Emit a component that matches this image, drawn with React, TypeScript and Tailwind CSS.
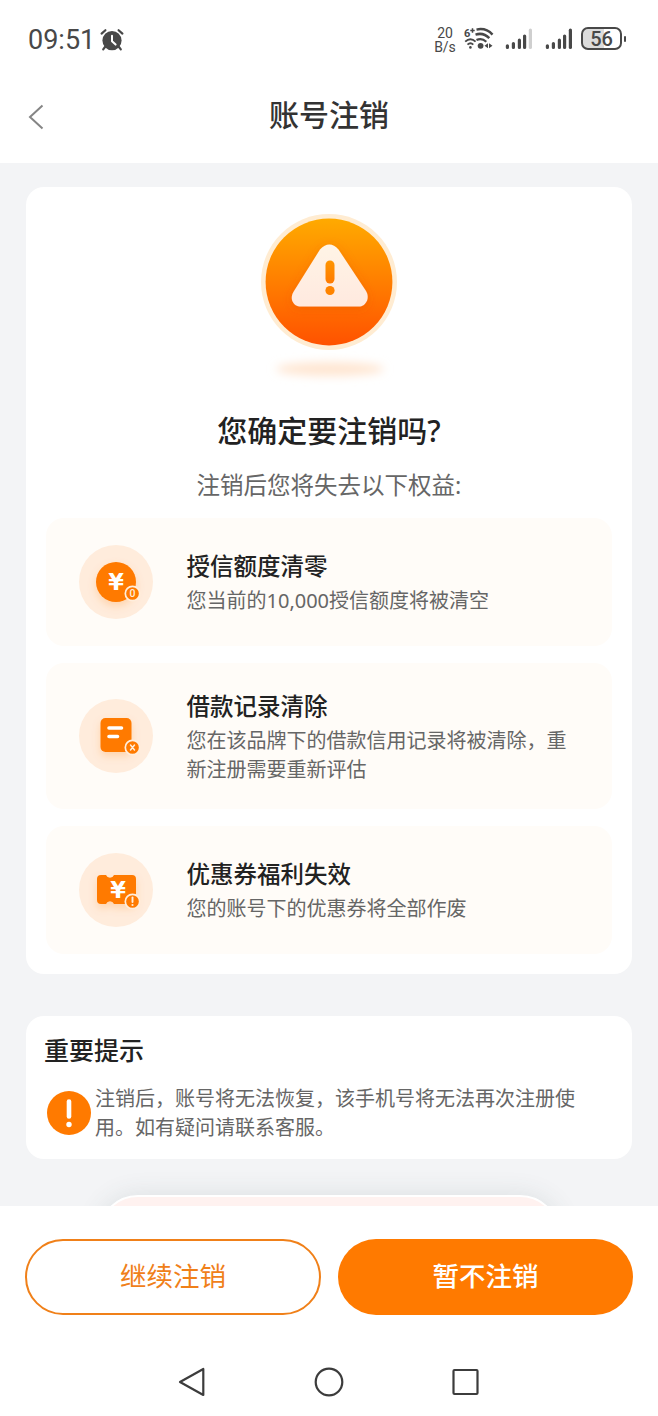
// App.tsx
import type { ReactNode } from 'react';

const ORANGE = '#ff7a00';

function AlarmIcon() {
  return (
    <svg width="24" height="24" viewBox="0 0 24 24" fill="none" className="ml-[5px]">
      <circle cx="12" cy="12.6" r="9.6" fill="#484848" />
      <path d="M1.6 5.6 5.4 2.2M22.4 5.6 18.6 2.2M5 19 3.2 21.4M19 19l1.8 2.4" stroke="#484848" strokeWidth="2.2" strokeLinecap="round" />
      <path d="M12 7.8v5.4l3.6 3.4" stroke="#fff" strokeWidth="2" strokeLinecap="round" strokeLinejoin="round" />
    </svg>
  );
}

function WifiIcon() {
  return (
    <svg width="30" height="26" viewBox="0 0 30 26" fill="none" stroke="#484848" strokeWidth="2">
      <text x="0" y="10.5" fontSize="11" fontWeight="700" fontFamily="Roboto, sans-serif" fill="#484848" stroke="none">6</text>
      <path d="M6.3 4.5h4.4M8.5 2.3v4.4" strokeWidth="1.5" />
      <path d="M12.5 3.6c6.2-1.4 11.7.4 16 5" strokeWidth="2.5" />
      <path d="M11.5 8.6c5.2-1.6 10-.4 13.8 3.6" strokeWidth="2.5" />
      <path d="M12.500 14c3.500-1.700 6.800-1.100 9.800 1.700" strokeWidth="2.2" />
      <path d="M1.200 15.600c3.200-3 7.200-3 10.400 0" strokeWidth="1.9" />
      <path d="M3.500 18.600c1.800-1.700 4-1.700 5.800 0" strokeWidth="1.8" />
      <circle cx="6.400" cy="21.400" r="1.300" fill="#484848" stroke="none" />
      <circle cx="16.600" cy="19.800" r="2.900" fill="#484848" stroke="none" />
      <path d="m24 17.300-3.500 2.500 3.500 2.500zM25 17.300l3.500 2.500-3.500 2.500z" fill="#484848" stroke="none" />
    </svg>
  );
}

function Signal({ full }: { full?: boolean }) {
  return (
    <svg width="28" height="24" viewBox="0 0 28 24" fill="none" strokeWidth="3.2" strokeLinecap="round" stroke="#484848">
      <path d="M2.400 19.800v1.600M8.400 17.600v3.800M14.400 14.200v7.200M19.600 10v11.400" />
      <path d="M25.400 4.200v17.200" stroke={full ? '#484848' : '#cfcfcf'} />
    </svg>
  );
}

function StatusBar() {
  return (
    <div className="flex h-[72px] items-start justify-between pl-7 pr-8 text-[#484848]">
      <div className="flex items-center pt-6 font-[Roboto,sans-serif] text-[27px] leading-8">
        <span className="w-[67px]">09:51</span>
        <AlarmIcon />
      </div>
      <div className="flex pt-[26px] font-[Roboto,sans-serif]">
        <div className="w-[22px] text-center text-[14px] leading-[14px]">
          <div>20</div>
          <div className="whitespace-nowrap">B/s</div>
        </div>
        <div className="ml-2">
          <WifiIcon />
        </div>
        <div className="ml-[11px] flex gap-3">
          <Signal />
          <Signal full />
        </div>
        <div className="ml-2 mt-px flex items-center self-start">
          <div className="flex h-[23px] w-[41px] items-center justify-center rounded-[7px] border-2 border-[#484848] bg-linear-to-r from-[#dcdcdc] from-56% to-white to-56% text-[20px] font-medium">
            56
          </div>
          <div className="ml-[2px] h-[6px] w-[2px] rounded-sm bg-[#484848]" />
        </div>
      </div>
    </div>
  );
}

function Header() {
  return (
    <header className="relative flex h-[91px] justify-center pt-[23px]">
      <svg width="16" height="26" viewBox="0 0 16 26" fill="none" className="absolute left-7 top-8">
        <path d="M14.500 1.500 2 13l12.500 11.500" stroke="#858585" strokeWidth="2" />
      </svg>
      <h1 className="text-[30px] leading-10 font-medium text-[#333]">账号注销</h1>
    </header>
  );
}

function WarningArt() {
  return (
    <svg width="180" height="190" viewBox="0 0 180 190" className="mx-auto block">
      <defs>
        <linearGradient id="disc" x1="0" y1="0" x2="0" y2="1">
          <stop offset="0" stopColor="#ffaa00" />
          <stop offset="1" stopColor="#ff5200" />
        </linearGradient>
        <linearGradient id="mark" x1="0" y1="0" x2="0" y2="1">
          <stop offset="0" stopColor="#ff9500" />
          <stop offset="1" stopColor="#ff7a00" />
        </linearGradient>
        <linearGradient id="tri" x1="0" y1="0" x2="0" y2="1">
          <stop offset="0" stopColor="#fff4e6" />
          <stop offset="1" stopColor="#ffe9df" />
        </linearGradient>
        <filter id="soft" x="-30%" y="-100%" width="160%" height="300%">
          <feGaussianBlur stdDeviation="5" />
        </filter>
        <filter id="triShadow" x="-30%" y="-30%" width="160%" height="160%">
          <feDropShadow dx="0" dy="2" stdDeviation="5" floodColor="#e04a00" floodOpacity=".3" />
        </filter>
      </defs>
      <ellipse cx="91" cy="172" rx="54" ry="7" fill="#ffe6d2" filter="url(#soft)" />
      <circle cx="90" cy="85" r="68" fill="#ffecd2" />
      <circle cx="90" cy="85" r="63.400" fill="url(#disc)" />
      <path
        d="M81 52.500Q90.500 42.500 99.500 52.500L127 94C131.500 101.500 126.500 109.500 120 109.500H62C54 109.500 50 101.500 55 94Z"
        fill="url(#tri)"
        filter="url(#triShadow)"
      />
      <rect x="86.500" y="63.500" width="9" height="23" rx="4.500" fill="url(#mark)" />
      <circle cx="91" cy="93.500" r="4.600" fill="#ff8400" />
    </svg>
  );
}

function Badge({ children }: { children: ReactNode }) {
  return (
    <>
      <circle cx="53.500" cy="48.500" r="7.200" fill={ORANGE} stroke="#ffeedd" strokeWidth="1.700" />
      {children}
    </>
  );
}

function BadgeText({ children }: { children: string }) {
  return (
    <text x="53.500" y="52.300" textAnchor="middle" fontSize="10.500" fontWeight="500" fontFamily="Roboto, sans-serif" fill="#ffeedd">
      {children}
    </text>
  );
}

function Yen({ x, y }: { x: number; y: number }) {
  return (
    <text x={x} y={y} textAnchor="middle" fontSize="22.500" fontWeight="700" fontFamily="DejaVu Sans, sans-serif" fill="#fff">
      ¥
    </text>
  );
}

function IconBase({ children }: { children: ReactNode }) {
  return (
    <svg width="74" height="74" viewBox="0 0 74 74" className="shrink-0">
      <defs>
        <filter id="glow" x="-40%" y="-40%" width="180%" height="190%">
          <feDropShadow dx="0" dy="4" stdDeviation="4" floodColor="#ff7a00" floodOpacity=".22" />
        </filter>
      </defs>
      <circle cx="37" cy="37" r="37" fill="#ffecdc" />
      {children}
    </svg>
  );
}

function YenIcon() {
  return (
    <IconBase>
      <circle cx="37" cy="37" r="20" fill={ORANGE} filter="url(#glow)" />
      <Yen x={37} y={45} />
      <Badge>
        <BadgeText>0</BadgeText>
      </Badge>
    </IconBase>
  );
}

function RecordIcon() {
  return (
    <IconBase>
      <rect x="21.500" y="19" width="31" height="34" rx="5" fill={ORANGE} filter="url(#glow)" />
      <path d="M30 29h12.500M30 37.500h8.500" stroke="#fff" strokeWidth="3.600" strokeLinecap="round" />
      <Badge>
        <path d="m51.500 46 4 5m0-5-4 5" stroke="#ffeedd" strokeWidth="1.500" strokeLinecap="round" />
      </Badge>
    </IconBase>
  );
}

function CouponIcon() {
  return (
    <IconBase>
      <path
        d="M22 22H27a4.300 4.300 0 0 0 8 0h18a4 4 0 0 1 4 4v21a4 4 0 0 1-4 4H35a4.300 4.300 0 0 0-8 0h-5a4 4 0 0 1-4-4V26a4 4 0 0 1 4-4Z"
        fill={ORANGE}
        filter="url(#glow)"
      />
      <Yen x={39} y={45} />
      <Badge>
        <path d="M53.500 44.500v4.500" stroke="#ffeedd" strokeWidth="1.900" strokeLinecap="round" />
        <circle cx="53.500" cy="52" r="1.100" fill="#ffeedd" />
      </Badge>
    </IconBase>
  );
}

const items = [
  { icon: <YenIcon />, title: '授信额度清零', desc: '您当前的10,000授信额度将被清空', height: 'h-32' },
  { icon: <RecordIcon />, title: '借款记录清除', desc: '您在该品牌下的借款信用记录将被清除，重新注册需要重新评估', height: 'h-[146px]' },
  { icon: <CouponIcon />, title: '优惠券福利失效', desc: '您的账号下的优惠券将全部作废', height: 'h-32' },
];

function LossCard() {
  return (
    <section className="h-[787px] rounded-[18px] bg-white px-5">
      <div className="pt-[10px]">
        <WarningArt />
      </div>
      <h2 className="mt-6 text-center text-[30px] leading-10 font-medium text-[#222]">您确定要注销吗?</h2>
      <p className="mt-[17px] text-center text-[23.500px] leading-[34px] text-[#666]">注销后您将失去以下权益:</p>
      <div className="mt-4 flex flex-col gap-[17px]">
        {items.map((item) => (
          <div key={item.title} className={`flex items-center rounded-[18px] bg-[#fffcf8] pl-[33px] pr-10 ${item.height}`}>
            {item.icon}
            <div className="ml-[33.500px]">
              <h3 className="text-[23.500px] leading-[34px] font-medium text-[#222]">{item.title}</h3>
              <p className="mt-[3px] w-[385px] text-[20px] leading-[29px] text-[#666]">{item.desc}</p>
            </div>
          </div>
        ))}
      </div>
    </section>
  );
}

function NoticeCard() {
  return (
    <section className="mt-[42px] h-[143px] rounded-[18px] bg-white pl-[18px] pt-4">
      <h2 className="text-[25px] leading-9 font-medium text-[#222]">重要提示</h2>
      <div className="mt-4 flex items-center">
        <svg width="44" height="44" viewBox="0 0 44 44" className="ml-[3px] shrink-0">
          <circle cx="22" cy="22" r="22" fill={ORANGE} />
          <path d="M22 10.500v15" stroke="#fff" strokeWidth="4.600" strokeLinecap="round" />
          <circle cx="22" cy="33.500" r="2.700" fill="#fff" />
        </svg>
        <p className="ml-1 w-[490px] text-[20px] leading-[29px] text-[#666]">
          注销后，账号将无法恢复，该手机号将无法再次注册使用。如有疑问请联系客服。
        </p>
      </div>
    </section>
  );
}

function NavBar() {
  return (
    <svg width="302" height="32" viewBox="0 0 302 32" fill="none" stroke="#3c3c3c" strokeWidth="2.200" strokeLinejoin="round" className="mx-auto block">
      <path d="M25.300 3v26L2 16Z" />
      <circle cx="151" cy="16" r="13.300" />
      <rect x="275.500" y="4" width="24" height="24" rx="1" />
    </svg>
  );
}

export default function App() {
  return (
    <div className="flex h-[1416px] w-[658px] flex-col overflow-hidden bg-white font-['Noto_Sans','Noto_Sans_CJK_SC',sans-serif]">
      <StatusBar />
      <Header />
      <main className="h-[1043px] overflow-hidden bg-[#f3f4f6] px-[26px] pt-6">
        <LossCard />
        <NoticeCard />
        <div className="mx-auto mt-9 h-20 w-[462px] rounded-[40px] border-2 border-white bg-[#fff2f0] shadow-[0_0_26px_rgba(60,80,80,0.12)]" />
      </main>
      <footer className="flex flex-1 flex-col justify-between pb-[18px] pt-[33px]">
        <div className="flex justify-between px-[25px]">
          <button className="h-[76px] w-[296px] rounded-full border-2 border-[#f08019] text-[26.500px] text-[#f08019]">继续注销</button>
          <button className="h-[76px] w-[295px] rounded-full bg-[#ff7a00] text-[26.500px] font-medium text-white">暂不注销</button>
        </div>
        <NavBar />
      </footer>
    </div>
  );
}
